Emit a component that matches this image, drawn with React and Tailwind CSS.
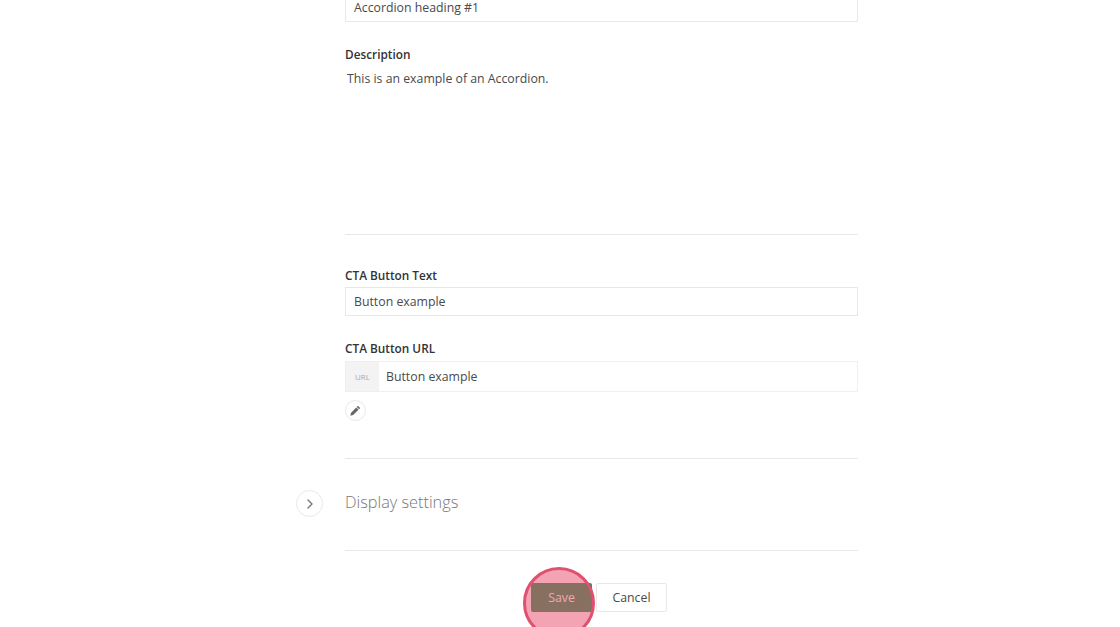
import React from "react";
import { ChevronRight } from "lucide-react";

const Label = ({ children }) => (
  <label className="block text-[11.8px] leading-[18px] font-semibold text-[#333]">{children}</label>
);

const PencilIcon = () => (
  <svg width="11" height="11" viewBox="0 0 12 12" fill="#666">
    <path d="M8.6 0.9 L11.1 3.4 L9.9 4.6 L7.4 2.1 Z" />
    <path d="M6.8 2.7 L9.3 5.2 L3.4 11 L0.4 11.6 L1 8.6 Z" />
  </svg>
);

const App = () => {
  return (
    <div className="relative h-[627px] overflow-hidden bg-white font-['Open_Sans',sans-serif] text-[#4a4a4a]">
      <div className="ml-[345px] w-[513px] -mt-[8px]">
        <div className="h-[30px] border border-[#e8e8e8] px-2 text-[12.3px] leading-[30px]">Accordion heading #1</div>

        <div className="mt-[23px]">
          <Label>Description</Label>
          <p className="mt-[6px] pl-[2px] text-[12.3px] leading-[20px]">This is an example of an Accordion.</p>
        </div>

        <div className="mt-[145px] h-[1px] bg-[#e8e8e8]" />

        <div className="mt-[31px]">
          <Label>CTA Button Text</Label>
          <div className="mt-[3px] h-[29px] border border-[#e8e8e8] px-2 text-[12.3px] leading-[28px]">Button example</div>
        </div>

        <div className="mt-[23px]">
          <Label>CTA Button URL</Label>
          <div className="mt-[4px] flex h-[31px] border border-[#efefef] text-[12.3px]">
            <span className="flex w-[33px] items-center justify-center bg-[#f3f3f3] text-[8px] text-[#aaa]">URL</span>
            <span className="pl-[7px] leading-[29px]">Button example</span>
          </div>
          <button className="mt-[8px] flex h-[21px] w-[21px] items-center justify-center rounded-full border border-[#e8e8e8]">
            <PencilIcon />
          </button>
        </div>

        <div className="mt-[37px] h-[1px] bg-[#e8e8e8]" />

        <div className="relative mt-[32px] h-[24px]">
          <button className="absolute -left-[49px] top-0 flex h-[27px] w-[27px] items-center justify-center rounded-full border border-[#e8e8e8] pt-[1px] text-[#777]">
            <ChevronRight size={16} strokeWidth={2} />
          </button>
          <h2 className="-mt-[1px] text-[16.3px] leading-[24px] font-light text-[#777]">Display settings</h2>
        </div>

        <div className="mt-[36px] h-[1px] bg-[#e8e8e8]" />

        <div className="mt-[32px] flex gap-[4px] pl-[186px]">
          <button className="h-[29px] w-[61px] rounded-[2px] bg-[#259953] pt-[1px] text-[12.3px] text-white">Save</button>
          <button className="h-[29px] w-[71px] rounded-[2px] border border-[#e8e8e8] pt-[1px] text-[12.3px]">Cancel</button>
        </div>
      </div>

      <div className="absolute left-[523px] top-[567px] h-[72px] w-[72px] rounded-full border-[3px] border-[#e0506f] bg-[#e9476b]/50" />
    </div>
  );
};

export default App;
